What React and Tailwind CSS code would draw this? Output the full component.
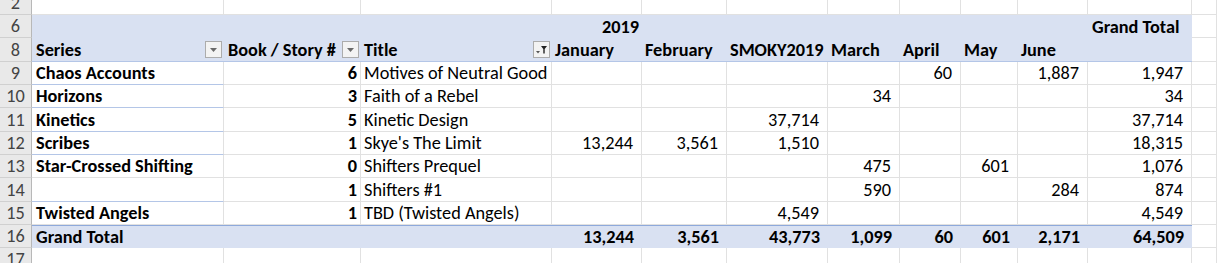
import React from 'react';

const GRID =
  'grid grid-cols-[32px_192px_137px_191px_90px_85px_101px_72px_61px_57px_70px_104px_1fr]';
const LINE = 'border-[#E1E1E1]';

const rows = [
  { n: '9', h: 'h-[23px]', a: 'Chaos Accounts', b: '6', c: 'Motives of Neutral Good', v: ['', '', '', '', '60', '', '1,887', '1,947'], groupEnd: true },
  { n: '10', h: 'h-[23px]', a: 'Horizons', b: '3', c: 'Faith of a Rebel', v: ['', '', '', '34', '', '', '', '34'], groupEnd: true },
  { n: '11', h: 'h-[24px]', a: 'Kinetics', b: '5', c: 'Kinetic Design', v: ['', '', '37,714', '', '', '', '', '37,714'], groupEnd: true },
  { n: '12', h: 'h-[23px]', a: 'Scribes', b: '1', c: "Skye's The Limit", v: ['13,244', '3,561', '1,510', '', '', '', '', '18,315'], groupEnd: true },
  { n: '13', h: 'h-[23px]', a: 'Star-Crossed Shifting', b: '0', c: 'Shifters Prequel', v: ['', '', '', '475', '', '601', '', '1,076'], groupEnd: false },
  { n: '14', h: 'h-[24px]', a: '', b: '1', c: 'Shifters #1', v: ['', '', '', '590', '', '', '284', '874'], groupEnd: true },
  { n: '15', h: 'h-[23px]', a: 'Twisted Angels', b: '1', c: 'TBD (Twisted Angels)', v: ['', '', '4,549', '', '', '', '', '4,549'], groupEnd: false },
];

const totals = ['13,244', '3,561', '43,773', '1,099', '60', '601', '2,171', '64,509'];
const months = ['January', 'February', 'SMOKY2019', 'March', 'April', 'May', 'June'];

function RowNum({ n }) {
  return (
    <div className="flex items-end justify-center pb-[1px] bg-[#E9E9E9] text-[#444] border-r border-b border-r-[#B8B8B8] border-b-[#D0D0D0]">
      {n}
    </div>
  );
}

function DropButton({ filtered }) {
  return (
    <div className="w-[17px] h-[17px] shrink-0 self-center mr-[2px] bg-[#F3F3F3] border border-[#ACACAC] flex items-center justify-center">
      {filtered ? (
        <svg width="13" height="11" viewBox="0 0 13 11">
          <path d="M1 7h4l-2 2.5z" fill="#555" />
          <path d="M6 2h6l-2.3 3v4.5h-1.4V5z" fill="#222" />
        </svg>
      ) : (
        <svg width="7" height="4" viewBox="0 0 7 4">
          <path d="M0 0h7L3.5 4z" fill="#6A6A6A" />
        </svg>
      )}
    </div>
  );
}

function BlankRow({ n, h }) {
  return (
    <div className={`${GRID} ${h}`}>
      <RowNum n={n} />
      {Array.from({ length: 12 }).map((_, i) => (
        <div key={i} className={`border-r border-b ${LINE}`} />
      ))}
    </div>
  );
}

export default function App() {
  return (
    <div
      className="w-[1217px] h-[263px] overflow-hidden bg-white text-black text-[18.3px] leading-[20px]"
      style={{ fontFamily: 'Carlito, Calibri, Lato, "Liberation Sans", sans-serif' }}
    >
      <div className="-mt-[8px]">
        <BlankRow n="2" h="h-[23px]" />

        {/* header row 6 */}
        <div className={`${GRID} h-[23px]`}>
          <RowNum n="6" />
          <div className="col-span-3 bg-[#D9E1F2]" />
          <div className="bg-[#D9E1F2] flex items-end justify-end pr-[3px] pb-[1px] font-bold">2019</div>
          <div className="col-span-6 bg-[#D9E1F2]" />
          <div className="bg-[#D9E1F2] flex items-end pl-[4px] pb-[1px] font-bold whitespace-nowrap">Grand Total</div>
          <div className={`border-r border-b ${LINE}`} />
        </div>

        {/* header row 8 */}
        <div className={`${GRID} h-[24px]`}>
          <RowNum n="8" />
          <div className="bg-[#D9E1F2] border-b border-[#B4C6E7] flex items-end justify-between pl-[4px] font-bold">
            <span className="pb-[1px]">Series</span>
            <DropButton />
          </div>
          <div className="bg-[#D9E1F2] border-b border-[#B4C6E7] flex items-end justify-between pl-[4px] font-bold">
            <span className="pb-[1px] whitespace-nowrap">Book / Story #</span>
            <DropButton />
          </div>
          <div className="bg-[#D9E1F2] border-b border-[#B4C6E7] flex items-end justify-between pl-[3px] font-bold">
            <span className="pb-[1px]">Title</span>
            <DropButton filtered />
          </div>
          {months.map((m) => (
            <div key={m} className="bg-[#D9E1F2] border-b border-[#B4C6E7] flex items-end pl-[3px] pb-[1px] font-bold whitespace-nowrap">
              {m}
            </div>
          ))}
          <div className="bg-[#D9E1F2] border-b border-[#B4C6E7]" />
          <div className={`border-r border-b ${LINE}`} />
        </div>

        {rows.map((r) => (
          <div key={r.n} className={`${GRID} ${r.h}`}>
            <RowNum n={r.n} />
            <div
              className={`border-r border-b ${LINE} flex items-end pl-[4px] pb-[1px] font-bold whitespace-nowrap ${
                r.groupEnd ? 'border-b-[#B4C6E7]' : ''
              }`}
            >
              {r.a}
            </div>
            <div className={`border-r border-b ${LINE} flex items-end justify-end pr-[3px] pb-[1px] font-bold`}>{r.b}</div>
            <div className={`border-r border-b ${LINE} flex items-end pl-[3px] pb-[1px] whitespace-nowrap`}>{r.c}</div>
            {r.v.map((v, i) => (
              <div key={i} className={`border-r border-b ${LINE} flex items-end justify-end pr-[8px] pb-[1px]`}>
                {v}
              </div>
            ))}
            <div className={`border-r border-b ${LINE}`} />
          </div>
        ))}

        {/* grand total row 16 */}
        <div className={`${GRID} h-[23px]`}>
          <RowNum n="16" />
          <div className="col-span-3 bg-[#D9E1F2] border-t border-[#8EA9DB] flex items-end pl-[4px] pb-[1px] font-bold">
            Grand Total
          </div>
          {totals.map((t, i) => (
            <div key={i} className="bg-[#D9E1F2] border-t border-[#8EA9DB] flex items-end justify-end pr-[8px] pb-[1px] font-bold">
              {t}
            </div>
          ))}
          <div className={`border-r border-b ${LINE}`} />
        </div>

        <BlankRow n="17" h="h-[23px]" />
      </div>
    </div>
  );
}
